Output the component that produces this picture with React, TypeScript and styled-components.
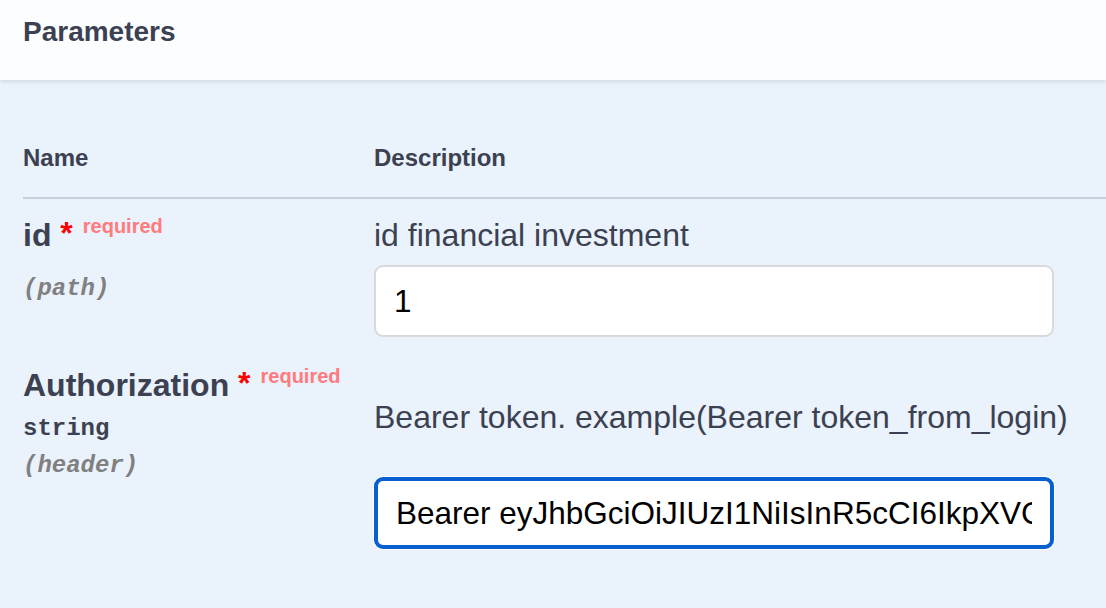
import React from "react";
import styled, { createGlobalStyle } from "styled-components";

const GlobalStyle = createGlobalStyle`
  html, body {
    margin: 0;
    padding: 0;
    background: #eaf2fc;
  }
  body {
    font-family: "Liberation Sans", Helvetica, Arial, sans-serif;
    color: #3b4151;
  }
  * { box-sizing: border-box; }
`;

const Page = styled.div`
  min-height: 100vh;
  background: #eaf2fc;
  overflow: hidden;
`;

const SectionHeader = styled.div`
  height: 80px;
  padding: 16px 23px 0;
  background: #fbfdff;
  box-shadow: 0 2px 4px rgba(0, 0, 0, 0.1);
  position: relative;
`;

const SectionTitle = styled.h4`
  margin: 0;
  font-size: 28px;
  font-weight: 700;
  line-height: normal;
  color: #3b4151;
`;

const Body = styled.div`
  padding: 64px 0 0 23px;
`;

const Columns = styled.div`
  display: grid;
  grid-template-columns: 351px 1fr;
`;

const HeadRow = styled(Columns)`
  padding-bottom: 25px;
  border-bottom: 2px solid #c7cfda;
`;

const HeadCell = styled.div`
  font-size: 24px;
  font-weight: 700;
  line-height: normal;
  color: #3b4151;
`;

const ParamRow = styled(Columns)`
  padding: 18px 0 12px;
`;

const NameCell = styled.div`
  display: flex;
  flex-direction: column;
  align-items: flex-start;
`;

const ParamName = styled.div`
  font-size: 32px;
  font-weight: 700;
  line-height: normal;
  color: #3b4151;
  white-space: nowrap;
`;

const Star = styled.span`
  position: relative;
  top: -2px;
  color: red;
`;

const Required = styled.span`
  position: relative;
  top: -13px;
  padding: 0 10px;
  font-size: 20px;
  font-weight: 700;
  color: #ff7b7d;
`;

const TypeLine = styled.div`
  padding-top: 11px;
  font-family: "Liberation Mono", "Courier New", monospace;
  font-size: 24px;
  font-weight: 700;
  line-height: normal;
  color: #3b4151;
`;

const InLine = styled.div`
  margin-top: 10px;
  font-family: "Liberation Mono", "Courier New", monospace;
  font-size: 24px;
  font-weight: 700;
  font-style: italic;
  line-height: normal;
  color: #808080;
`;

const DescCell = styled.div`
  display: flex;
  flex-direction: column;
  align-items: flex-start;
`;

const Description = styled.div<{ $offset: number }>`
  margin-top: ${(p) => p.$offset}px;
  font-size: 32px;
  font-weight: 400;
  line-height: normal;
  color: #3b4151;
  white-space: nowrap;
`;

const ValueInput = styled.input<{ $gap: number; $focused?: boolean }>`
  display: block;
  width: 680px;
  height: 72px;
  margin: ${(p) => p.$gap}px 0 0;
  padding: 0 18px;
  border: ${(p) => (p.$focused ? "4px solid #0860d0" : "2px solid #d9d9d9")};
  border-radius: 9px;
  box-shadow: ${(p) => (p.$focused ? "0 0 0 1px #ffffff" : "none")};
  background: #ffffff;
  font-family: "Liberation Sans", Helvetica, Arial, sans-serif;
  font-size: 31.5px;
  color: #000000;
  outline: none;
`;

type Param = {
  name: string;
  type?: string;
  location: string;
  description: string;
  value: string;
  descOffset: number;
  inputGap: number;
  focused?: boolean;
};

const params: Param[] = [
  {
    name: "id",
    location: "(path)",
    description: "id financial investment",
    value: "1",
    descOffset: 0,
    inputGap: 11,
  },
  {
    name: "Authorization",
    type: "string",
    location: "(header)",
    description: "Bearer token. example(Bearer token_from_login)",
    value:
      "Bearer eyJhbGciOiJIUzI1NiIsInR5cCI6IkpXVCJ9.eyJzdWIiOiIxIiwiaWF0IjoxNjE2MjM5MDIyfQ",
    descOffset: 32,
    inputGap: 41,
    focused: true,
  },
];

export default function App() {
  return (
    <Page>
      <GlobalStyle />
      <SectionHeader>
        <SectionTitle>Parameters</SectionTitle>
      </SectionHeader>
      <Body>
        <HeadRow>
          <HeadCell>Name</HeadCell>
          <HeadCell>Description</HeadCell>
        </HeadRow>
        {params.map((p) => (
          <ParamRow key={p.name}>
            <NameCell>
              <ParamName>
                {p.name}
                <Star>{"\u00a0*"}</Star>
                <Required>required</Required>
              </ParamName>
              <TypeLine>{p.type ?? ""}</TypeLine>
              <InLine>{p.location}</InLine>
            </NameCell>
            <DescCell>
              <Description $offset={p.descOffset}>{p.description}</Description>
              <ValueInput
                $gap={p.inputGap}
                $focused={p.focused}
                value={p.value}
                readOnly
              />
            </DescCell>
          </ParamRow>
        ))}
      </Body>
    </Page>
  );
}
